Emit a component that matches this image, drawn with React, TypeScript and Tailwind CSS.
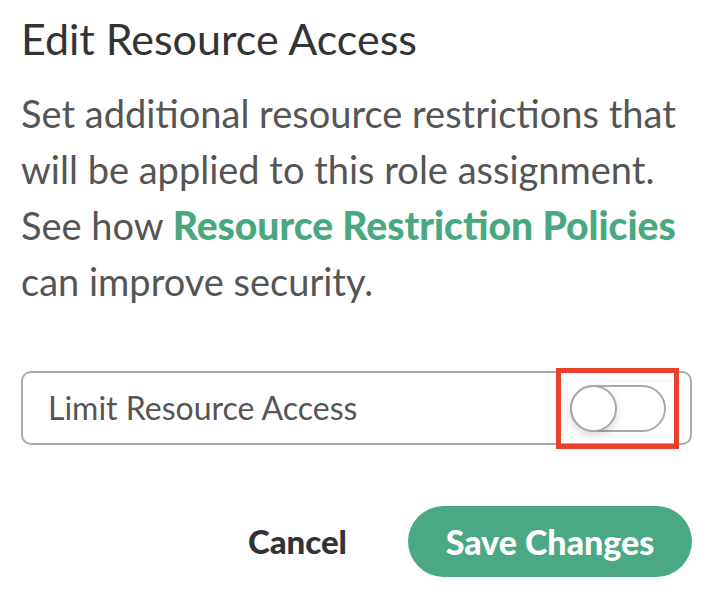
export default function App() {
  return (
    <div className="min-h-screen bg-white px-[21px] pt-[13px] font-['Lato',sans-serif] text-[#555]">
      <h1 className="text-[43px] leading-[52px] font-normal text-[#333]">Edit Resource Access</h1>
      <p className="mt-[20px] w-[672px] text-[38px] leading-[56px] text-[#555]">
        Set additional resource restrictions that will be applied to this role assignment. See how{" "}
        <a className="text-[39px] font-black text-[#4aa881]">Resource Restriction Policies</a> can improve security.
      </p>

      <div className="relative mt-[62px] flex h-[74px] w-[671px] items-center justify-between rounded-[10px] border-2 border-[#aaa] pl-[25px] pr-[24px]">
        <span className="text-[32px] text-[#555]">Limit Resource Access</span>
        <button className="relative h-[47px] w-[96px] rounded-full border-2 border-[#a9a9a9] bg-white">
          <span className="absolute -left-[2px] -top-[2px] h-[47px] w-[47px] rounded-full border-2 border-[#a9a9a9] bg-white shadow-[0_4px_8px_rgba(0,0,0,0.15)]" />
        </button>
        <div className="pointer-events-none absolute left-[533px] top-[-5px] h-[81px] w-[123px] border-[5px] border-[#e8402a]" />
      </div>

      <div className="mt-[61px] flex items-center justify-end gap-[61px] pr-[1px]">
        <button className="text-[33px] font-black text-[#333]">Cancel</button>
        <button className="h-[71px] w-[284px] rounded-full bg-[#4ba884] text-[34px] font-black text-white">
          Save Changes
        </button>
      </div>
    </div>
  )
}
